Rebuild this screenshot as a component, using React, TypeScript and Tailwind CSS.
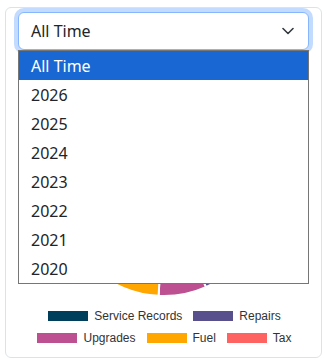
const options = ['All Time', '2026', '2025', '2024', '2023', '2022', '2021', '2020'];

const segments = [
  { label: 'Service Records', color: '#003f5c', from: 0, to: 118 },
  { label: 'Repairs', color: '#58508d', from: 118, to: 156 },
  { label: 'Upgrades', color: '#bc5090', from: 156, to: 183 },
  { label: 'Fuel', color: '#ffa600', from: 183, to: 262 },
  { label: 'Tax', color: '#ff6361', from: 262, to: 360 },
];

function arc(cx: number, cy: number, r: number, a0: number, a1: number) {
  const p = (a: number) => {
    const rad = ((a - 90) * Math.PI) / 180;
    return [cx + r * Math.cos(rad), cy + r * Math.sin(rad)];
  };
  const [x0, y0] = p(a0);
  const [x1, y1] = p(a1);
  const large = a1 - a0 > 180 ? 1 : 0;
  return `M${cx} ${cy} L${x0} ${y0} A${r} ${r} 0 ${large} 1 ${x1} ${y1} Z`;
}

function Swatch({ color, label }: { color: string; label: string }) {
  return (
    <div className="flex items-center gap-[6px]">
      <span className="block w-[40px] h-[10px]" style={{ backgroundColor: color }} />
      <span className="text-[12px] text-[#333]">{label}</span>
    </div>
  );
}

export default function App() {
  return (
    <div className="pt-[7px] px-[5px] font-['Noto_Sans',sans-serif]">
      <div className="border border-[#dee2e6] rounded-[6px] pt-[4px] px-[12px] pb-[8px] bg-white">
        {/* year select, open */}
        <div className="relative">
          <div className="h-[38px] flex items-center justify-between pl-[12px] pr-[14px] border border-[#86b7fe] rounded-[6px] shadow-[0_0_0_4px_rgba(13,110,253,0.25)] bg-white">
            <span className="text-[16px] text-[#212529]">All Time</span>
            <svg width="12" height="8" viewBox="0 0 12 8" fill="none">
              <path d="M1 1.5l5 5 5-5" stroke="#343a40" strokeWidth="1.6" strokeLinecap="round" strokeLinejoin="round" />
            </svg>
          </div>
          <div className="absolute left-0 right-0 top-full z-10 bg-white border border-[#767676]">
            {options.map((o, i) => (
              <div
                key={o}
                className={`h-[29px] flex items-center pl-[12px] text-[16px] ${
                  i === 0 ? 'bg-[#1967d2] text-white' : 'text-[#212529]'
                }`}
              >
                {o}
              </div>
            ))}
          </div>
        </div>

        {/* pie chart */}
        <div className="mt-[39px] flex justify-center">
          <svg width="208" height="208" viewBox="0 0 208 208">
            {segments.map((s) => (
              <path key={s.label} d={arc(104, 104, 103, s.from, s.to)} fill={s.color} stroke="#fff" strokeWidth="2" />
            ))}
          </svg>
        </div>

        {/* legend */}
        <div className="mt-[8px] font-['Liberation_Sans',Arial,sans-serif]">
          <div className="h-[22px] flex items-center justify-center gap-[11px] pl-[2px]">
            <Swatch color="#003f5c" label="Service Records" />
            <Swatch color="#58508d" label="Repairs" />
          </div>
          <div className="h-[22px] flex items-center justify-center gap-[11px] pl-[2px]">
            <Swatch color="#bc5090" label="Upgrades" />
            <Swatch color="#ffa600" label="Fuel" />
            <Swatch color="#ff6361" label="Tax" />
          </div>
        </div>
      </div>
    </div>
  );
}
